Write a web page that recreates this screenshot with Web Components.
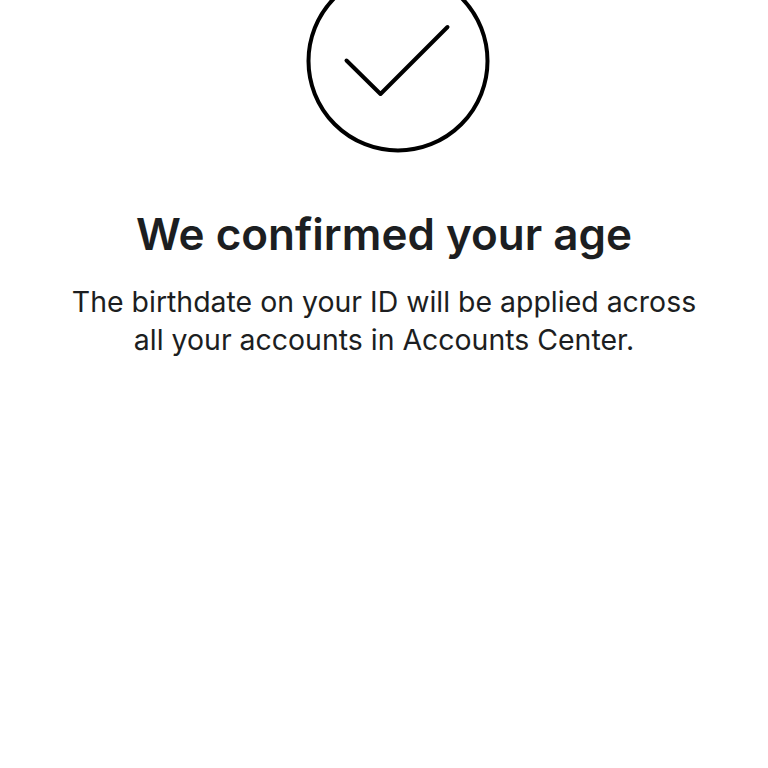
<!DOCTYPE html>
<html>
<head>
<meta charset="utf-8">
<title>We confirmed your age</title>
<style>
    html, body { margin: 0; padding: 0; background: #fff; }
    body { width: 768px; height: 768px; overflow: hidden; font-family: "Inter", "Noto Sans", sans-serif; color: #1c1e21; }
</style>
</head>
<body>
<confirm-screen>
    <span slot="title">We confirmed your age</span>
    <span slot="line">The birthdate on your ID will be applied across</span>
    <span slot="line">all your accounts in Accounts Center.</span>
</confirm-screen>

<template id="check-badge-template">
    <style>
        :host { display: block; width: 186px; height: 186px; }
        svg { display: block; }
    </style>
    <svg width="186" height="186" viewBox="0 0 186 186" fill="none" stroke="#000" stroke-width="4" stroke-linecap="round" stroke-linejoin="round">
        <circle cx="93" cy="93" r="89.5"></circle>
        <path d="M41.5 92.5 L75.5 126 L142.5 59"></path>
    </svg>
</template>

<template id="confirm-screen-template">
    <style>
        :host { display: flex; flex-direction: column; align-items: center; width: 768px; height: 768px; }
        check-badge { margin: -32px 0 0 28px; }
        h1 { margin: 53px 0 0; font-size: 44px; line-height: 54px; font-weight: 600; white-space: nowrap; }
        .body { display: flex; flex-direction: column; align-items: center; margin-top: 22px; font-size: 28.45px; line-height: 38px; font-weight: 400; white-space: nowrap; }
        ::slotted(span) { display: block; }
    </style>
    <check-badge></check-badge>
    <h1><slot name="title"></slot></h1>
    <div class="body"><slot name="line"></slot></div>
</template>

<script>
    // Small helper so each element gets its shadow root from a template
    class TemplatedElement extends HTMLElement {
        constructor(templateId) {
            super();
            this.attachShadow({ mode: 'open' });
            const template = document.getElementById(templateId);
            this.shadowRoot.appendChild(template.content.cloneNode(true));
        }
    }

    class CheckBadge extends TemplatedElement {
        constructor() { super('check-badge-template'); }
    }

    class ConfirmScreen extends TemplatedElement {
        constructor() { super('confirm-screen-template'); }
    }

    customElements.define('check-badge', CheckBadge);
    customElements.define('confirm-screen', ConfirmScreen);
</script>
</body>
</html>
